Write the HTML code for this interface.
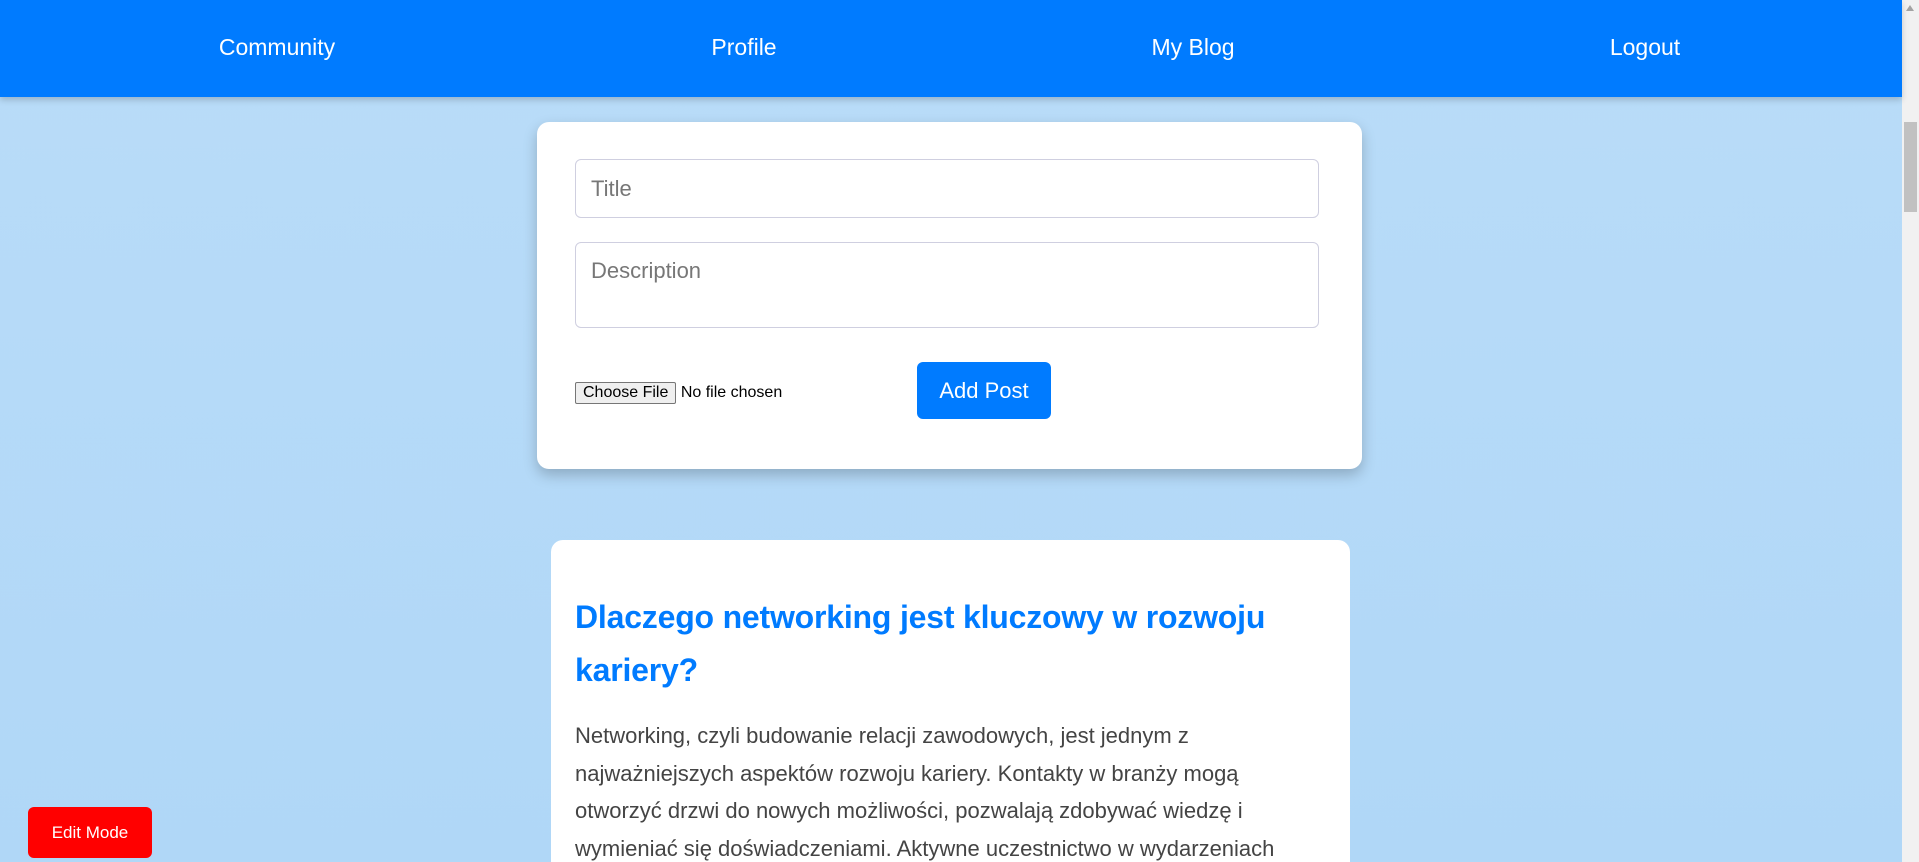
<!DOCTYPE html>
<html><head><meta charset="utf-8"><style>
html,body{margin:0;padding:0;height:862px;overflow:hidden}
body{width:1919px;position:relative;font-family:"Liberation Sans Narrow","Liberation Sans",sans-serif;background:linear-gradient(#b9dcf8,#b0d7f7);}
.nav{position:absolute;left:0;top:0;width:1902px;height:97px;background:#007bff;box-shadow:0 3px 6px rgba(0,0,0,.18);z-index:2}
.nav span{position:absolute;top:34px;color:#fff;font-size:23px;transform:translateX(-50%);white-space:nowrap}
.sb{position:absolute;right:0;top:0;width:17px;height:862px;background:#f1f1f1}
.sb .t{position:absolute;left:2px;top:122px;width:13px;height:90px;background:#c1c1c1}
.sb .a{position:absolute;left:4px;top:5px;width:0;height:0;border-left:4px solid transparent;border-right:4px solid transparent;border-bottom:6px solid #a3a3a3}
.card{position:absolute;background:#fff;border-radius:12px}
.c1{left:537px;top:122px;width:825px;height:347px;box-shadow:0 6px 14px rgba(0,0,0,.22)}
.inp{position:absolute;left:38px;width:744px;border:1px solid #cfcfe0;border-radius:6px;box-sizing:border-box;color:#777;font-size:22px;padding-left:15px}
.btn{position:absolute;left:380px;top:240px;width:134px;height:57px;background:#007bff;color:#fff;border-radius:6px;font-size:22px;text-align:center;line-height:57px}
.c2{left:551px;top:540px;width:799px;height:340px;border-radius:12px 12px 0 0}
h1{position:absolute;left:24px;top:51px;margin:0;color:#007bff;font-size:32px;line-height:53px;font-weight:bold;white-space:nowrap;letter-spacing:-0.2px}
p{position:absolute;left:24px;top:177px;margin:0;color:#444;font-size:22px;line-height:37.5px;white-space:nowrap}
.edit{position:absolute;left:28px;top:807px;width:124px;height:51px;background:#ff0000;color:#fff;border-radius:6px;font-size:17px;text-align:center;line-height:51px;font-family:"Liberation Sans",sans-serif}
</style></head><body>
<div class="nav"><span style="left:277px">Community</span><span style="left:744px">Profile</span><span style="left:1193px">My Blog</span><span style="left:1645px">Logout</span></div>
<div class="card c1">
<div class="inp" style="top:37px;height:59px;line-height:57px">Title</div>
<div class="inp" style="top:120px;height:86px;padding-top:16px;line-height:24px">Description</div>
<div style="position:absolute;left:38px;top:260px;font-family:'Liberation Sans',sans-serif;font-size:16px;color:#000;white-space:nowrap"><span style="display:inline-block;border:1px solid #767676;background:#efefef;border-radius:2px;padding:1px 7px">Choose File</span> No file chosen</div>
<div class="btn">Add Post</div>
</div>
<div class="card c2">
<h1>Dlaczego networking jest kluczowy w rozwoju<br>kariery?</h1>
<p>Networking, czyli budowanie relacji zawodowych, jest jednym z<br>najważniejszych aspektów rozwoju kariery. Kontakty w branży mogą<br>otworzyć drzwi do nowych możliwości, pozwalają zdobywać wiedzę i<br>wymieniać się doświadczeniami. Aktywne uczestnictwo w wydarzeniach</p>
</div>
<div class="edit">Edit Mode</div>
<div class="sb"><div class="a"></div><div class="t"></div></div>
</body></html>
